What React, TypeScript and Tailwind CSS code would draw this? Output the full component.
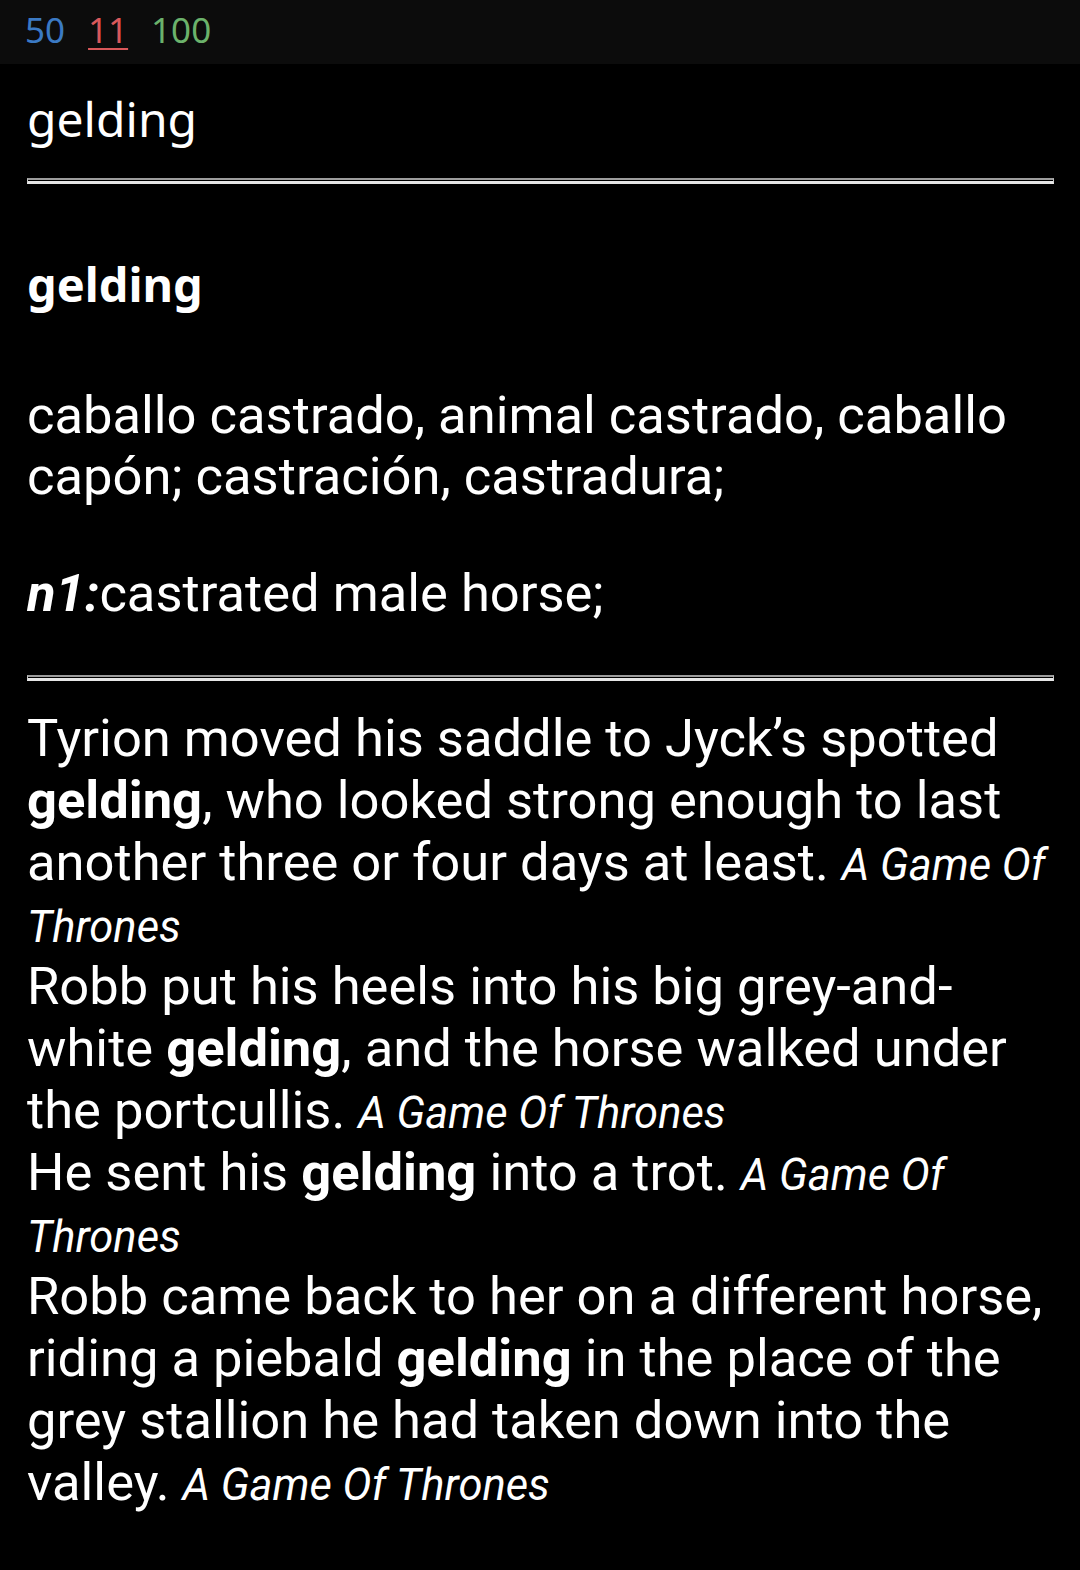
import React from 'react';

const quotes: { parts: [string, string, string]; src: string }[] = [
  {
    parts: ['Tyrion moved his saddle to Jyck’s spotted ', 'gelding', ', who looked strong enough to last another three or four days at least. '],
    src: 'A Game Of Thrones',
  },
  {
    parts: ['Robb put his heels into his big grey-and-white ', 'gelding', ', and the horse walked under the portcullis. '],
    src: 'A Game Of Thrones',
  },
  {
    parts: ['He sent his ', 'gelding', ' into a trot. '],
    src: 'A Game Of Thrones',
  },
  {
    parts: ['Robb came back to her on a different horse, riding a piebald ', 'gelding', ' in the place of the grey stallion he had taken down into the valley. '],
    src: 'A Game Of Thrones',
  },
];

const Rule = () => (
  <div className="h-[6px] border-t-2 border-b-[3px] border-x border-t-[#9c9c9c] border-b-[#e6e6e6] border-x-[#c8c8c8]" />
);

export default function App() {
  return (
    <div className="min-h-[1570px] w-[1080px] bg-black text-white">
      <div className="h-[64px] bg-[#0c0c0c] flex items-center gap-[23px] pl-[25px] pb-[4px] text-[35px] font-['Noto_Sans',sans-serif]">
        <span className="text-[#3b7ac4]">50</span>
        <span className="text-[#d9585a] underline underline-offset-[5px] decoration-2">11</span>
        <span className="text-[#6bb26b]">100</span>
      </div>

      <div className="px-[27px] pr-[26px]">
        <div className="pt-[25px] pb-[29px] text-[48px] leading-[60px] font-['Noto_Sans',sans-serif]">gelding</div>
        <Rule />

        <div className="pt-[70px] text-[47px] leading-[60px] font-bold font-['Noto_Sans',sans-serif]">gelding</div>

        <div className="font-['Roboto',sans-serif] text-[52.5px] leading-[61px]">
          <div className="pt-[71px]">caballo castrado, animal castrado, caballo capón; castración, castradura;</div>
          <div className="pt-[56px]">
            <span className="font-bold italic">n1:</span>castrated male horse;
          </div>
        </div>

        <div className="pt-[51px] pb-[26px]">
          <Rule />
        </div>

        <div className="font-['Roboto',sans-serif] text-[52.5px] leading-[62px]">
          {quotes.map((q, i) => (
            <div key={i}>
              {q.parts[0]}
              <b>{q.parts[1]}</b>
              {q.parts[2]}
              <i className="text-[43.5px] leading-[40px]">{q.src}</i>
            </div>
          ))}
        </div>
      </div>
    </div>
  );
}
